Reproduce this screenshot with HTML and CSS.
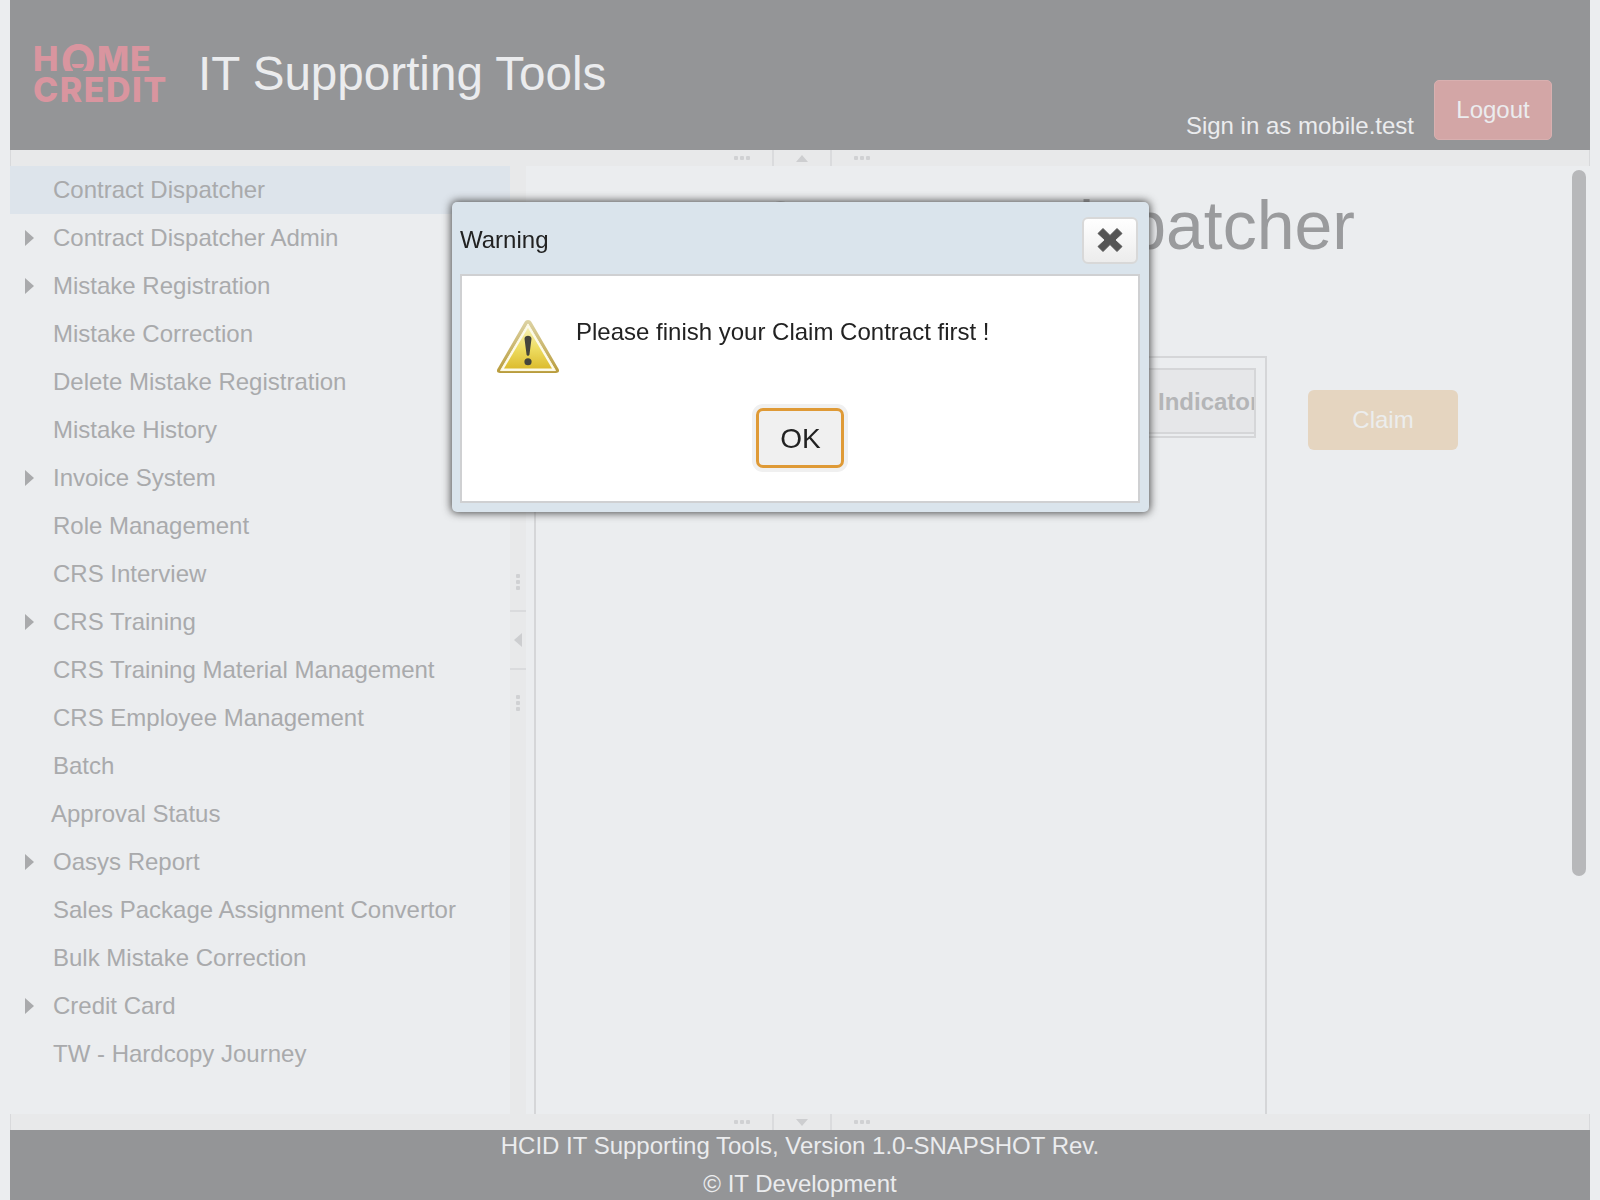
FILE: index.html
```html
<!DOCTYPE html>
<html lang="en">
<head>
    <meta charset="UTF-8">
    <title>IT Supporting Tools</title>
    <link rel="stylesheet" href="styles.css">
</head>
<body>
    <div class="header">
        <div class="logo">
            <div class="logo-line">H<span class="logo-o">O</span>ME</div>
            <div class="logo-line">CREDIT</div>
        </div>
        <div class="app-title">IT Supporting Tools</div>
        <div class="user-box">
            <span class="user-name">Sign in as mobile.test</span>
            <button class="logout-btn">Logout</button>
        </div>
    </div>

    <div class="resizer-h">
        <span class="dots"><i></i><i></i><i></i></span>
        <span class="toggler"><span class="arrow-up"></span></span>
        <span class="dots"><i></i><i></i><i></i></span>
    </div>

    <div class="middle">
        <ul class="menu">
            <li class="active">Contract Dispatcher</li>
            <li class="sub">Contract Dispatcher Admin</li>
            <li class="sub">Mistake Registration</li>
            <li>Mistake Correction</li>
            <li>Delete Mistake Registration</li>
            <li>Mistake History</li>
            <li class="sub">Invoice System</li>
            <li>Role Management</li>
            <li>CRS Interview</li>
            <li class="sub">CRS Training</li>
            <li>CRS Training Material Management</li>
            <li>CRS Employee Management</li>
            <li>Batch</li>
            <li class="shifted">Approval Status</li>
            <li class="sub">Oasys Report</li>
            <li>Sales Package Assignment Convertor</li>
            <li>Bulk Mistake Correction</li>
            <li class="sub">Credit Card</li>
            <li>TW - Hardcopy Journey</li>
        </ul>

        <div class="resizer-v">
            <span class="dots-v"><i></i><i></i><i></i></span>
            <span class="toggler-v"><span class="arrow-left"></span></span>
            <span class="dots-v"><i></i><i></i><i></i></span>
        </div>

        <div class="content">
            <div class="content-main">
                <h1>Contract Dispatcher</h1>
                <div class="work-row">
                    <div class="table-box">
                        <div class="table-head">
                            <table>
                                <thead>
                                    <tr>
                                        <th class="col-fill"></th>
                                        <th class="col-indicator"><div class="clip">Indicator</div></th>
                                    </tr>
                                </thead>
                            </table>
                        </div>
                    </div>
                    <button class="claim-btn">Claim</button>
                </div>
            </div>
            <div class="scroll-rail"><div class="scroll-thumb"></div></div>
        </div>
    </div>

    <div class="resizer-h">
        <span class="dots"><i></i><i></i><i></i></span>
        <span class="toggler"><span class="arrow-down"></span></span>
        <span class="dots"><i></i><i></i><i></i></span>
    </div>

    <div class="footer">
        <div>HCID IT Supporting Tools, Version 1.0-SNAPSHOT Rev.</div>
        <div>© IT Development</div>
    </div>

    <!-- Warning dialog -->
    <div class="dialog">
        <div class="dialog-title">
            <span class="dialog-caption">Warning</span>
            <button class="close-btn">
                <svg width="26" height="26" viewBox="0 0 26 26">
                    <path d="M6 1.5 L13 8.5 L20 1.5 L25 6.5 L18 13 L25 19.5 L20 24.5 L13 17.5 L6 24.5 L1 19.5 L8 13 L1 6.5 Z" fill="#555" stroke="#555" stroke-width="1" stroke-linejoin="round"/>
                </svg>
            </button>
        </div>
        <div class="dialog-body">
            <div class="dialog-msg">
                <svg class="warn-icon" width="64" height="55" viewBox="0 0 64 56" preserveAspectRatio="none">
                    <defs>
                        <linearGradient id="warnRim" x1="0" y1="0" x2="0" y2="1">
                            <stop offset="0" stop-color="#ddd3a4"/>
                            <stop offset="1" stop-color="#b99c3c"/>
                        </linearGradient>
                        <linearGradient id="warnFill" x1="0" y1="0" x2="0" y2="1">
                            <stop offset="0" stop-color="#f6f0b4"/>
                            <stop offset="0.5" stop-color="#eedd62"/>
                            <stop offset="1" stop-color="#dcbc2e"/>
                        </linearGradient>
                    </defs>
                    <path d="M32 1 C34 1 35 2 36 4 L62 50 C64 53 63 55 60 55 L4 55 C1 55 0 53 2 50 L28 4 C29 2 30 1 32 1 Z" fill="url(#warnRim)"/>
                    <path d="M32 5 L59.5 52.5 L4.5 52.5 Z" fill="#fdfbea" stroke="#fdfbea" stroke-width="1" stroke-linejoin="round"/>
                    <path d="M32 9 L56 50.5 L8 50.5 Z" fill="url(#warnFill)"/>
                    <path d="M28.5 20 C28.5 16 35.5 16 35.5 20 L33.5 36 C33.5 38 30.5 38 30.5 36 Z" fill="#45453c"/>
                    <circle cx="32" cy="43.5" r="3.6" fill="#45453c"/>
                </svg>
                <div class="msg-text">Please finish your Claim Contract first !</div>
            </div>
            <div class="dialog-buttons">
                <button class="ok-btn">OK</button>
            </div>
        </div>
    </div>
</body>
</html>
```

FILE: styles.css
```css
html, body {
    margin: 0;
    height: 100%;
}
body {
    font-family: "Liberation Sans", Arial, sans-serif;
    font-size: 24px;
    background-color: #ebedef;
    padding: 0 10px;
    height: 1200px;
    box-sizing: border-box;
    overflow: hidden;
    display: flex;
    flex-direction: column;
}
button {
    font-family: inherit;
}

/* header */
.header {
    height: 150px;
    flex: none;
    background-color: #949597;
    display: flex;
}
.logo {
    margin: 43px 0 0 23px;
    width: 166px;
    color: #d9959f;
    font-family: Inter, "Liberation Sans", sans-serif;
    font-weight: 800;
    font-size: 34px;
    line-height: 31px;
    letter-spacing: 1px;
    white-space: nowrap;
}
.logo-line {
    height: 31px;
}
.logo-line + .logo-line {
    letter-spacing: 1.5px;
}
.logo-o {
    position: relative;
    display: inline-block;
    font-size: 46px;
    font-weight: 700;
    line-height: 34px;
    height: 27px;
    overflow: hidden;
    letter-spacing: 0;
    margin: 0 1px;
}
.logo-o::before {
    content: "";
    position: absolute;
    left: 50%;
    margin-left: -5px;
    bottom: 0;
    width: 10px;
    height: 3px;
    background-color: #949597;
}
.logo-o::after {
    content: "";
    position: absolute;
    left: 50%;
    margin-left: -6px;
    top: 20px;
    width: 12px;
    height: 4px;
    background-color: #d9959f;
    border-radius: 0 0 6px 6px;
}
.app-title {
    font-size: 47.6px;
    color: #ebecee;
    margin-left: -1px;
    line-height: 148px;
}
.user-box {
    margin-left: auto;
    margin-right: 38px;
    display: flex;
    align-items: flex-end;
    padding-bottom: 10px;
}
.user-name {
    color: #ebecee;
    margin-right: 20px;
    line-height: 28px;
}
.logout-btn {
    width: 118px;
    height: 60px;
    font-size: 24px;
    color: #ebecee;
    background-color: #d3a6a6;
    border: 1px solid #d8b0b0;
    border-radius: 5px;
}

/* resizers */
.resizer-h {
    height: 16px;
    flex: none;
    background-color: #e8e9ea;
    border-left: 1px solid #d8d9db;
    border-right: 1px solid #d8d9db;
    display: flex;
    justify-content: center;
    align-items: center;
    padding-left: 4px;
}
.dots {
    display: flex;
    gap: 2px;
    width: 40px;
}
.dots:first-child {
    justify-content: flex-end;
    margin-right: 22px;
}
.dots:last-child {
    margin-left: 22px;
}
.dots i, .dots-v i {
    display: block;
    width: 4px;
    height: 4px;
    background-color: #d0d1d3;
    border-radius: 1px;
}
.toggler {
    width: 60px;
    height: 16px;
    box-sizing: border-box;
    border-left: 2px solid #dadbdd;
    border-right: 2px solid #dadbdd;
    display: flex;
    justify-content: center;
    align-items: center;
}
.arrow-up {
    border-left: 6px solid transparent;
    border-right: 6px solid transparent;
    border-bottom: 7px solid #cdced0;
}
.arrow-down {
    border-left: 6px solid transparent;
    border-right: 6px solid transparent;
    border-top: 7px solid #cdced0;
}

/* middle row */
.middle {
    flex: 1;
    display: flex;
    min-height: 0;
}
.menu {
    width: 500px;
    flex: none;
    margin: 0;
    padding: 0;
    list-style: none;
    color: #a9aaac;
}
.menu li {
    height: 48px;
    line-height: 48px;
    padding-left: 43px;
    position: relative;
}
.menu li.active {
    background-color: #dde4eb;
}
.menu li.shifted {
    padding-left: 41px;
}
.menu li.sub::before {
    content: "";
    position: absolute;
    left: 15px;
    top: 16px;
    border-top: 8px solid transparent;
    border-bottom: 8px solid transparent;
    border-left: 9px solid #a9aaac;
}
.resizer-v {
    width: 16px;
    flex: none;
    background-color: #e8e9ea;
    display: flex;
    flex-direction: column;
    align-items: center;
    justify-content: center;
    padding-top: 5px;
    box-sizing: border-box;
}
.dots-v {
    display: flex;
    flex-direction: column;
    gap: 2px;
    height: 40px;
}
.dots-v:first-child {
    justify-content: flex-end;
    margin-bottom: 20px;
}
.dots-v:last-child {
    margin-top: 25px;
}
.toggler-v {
    width: 16px;
    height: 60px;
    box-sizing: border-box;
    border-top: 2px solid #dadbdd;
    border-bottom: 2px solid #dadbdd;
    display: flex;
    justify-content: center;
    align-items: center;
}
.arrow-left {
    border-top: 7px solid transparent;
    border-bottom: 7px solid transparent;
    border-right: 8px solid #cdced0;
}

/* center panel */
.content {
    flex: 1;
    display: flex;
    min-width: 0;
}
.content-main {
    flex: 1;
    min-width: 0;
    display: flex;
    flex-direction: column;
}
h1 {
    margin: 0;
    height: 190px;
    font-size: 68px;
    font-weight: normal;
    line-height: 118px;
    color: #9a9b9d;
    text-align: center;
    padding-left: 11px;
    flex: none;
}
.work-row {
    flex: 1;
    display: flex;
    align-items: flex-start;
    padding-left: 8px;
}
.table-box {
    width: 733px;
    height: 100%;
    box-sizing: border-box;
    border: 2px solid #d5d6d8;
    border-bottom: none;
    padding: 10px 9px;
    flex: none;
}
.table-head {
    border: 2px solid #d5d6d8;
    padding-bottom: 2px;
}
table {
    width: 100%;
    table-layout: fixed;
    border-collapse: collapse;
}
th {
    height: 62px;
    padding: 0;
    background-color: #e6e7e9;
    border-bottom: 2px solid #d5d6d8;
    color: #b4b5b7;
    font-size: 24px;
    text-align: left;
}
.col-indicator {
    width: 96px;
}
.clip {
    overflow: hidden;
    white-space: nowrap;
    width: 96px;
    padding-top: 2px;
}
.claim-btn {
    width: 150px;
    height: 60px;
    margin: 34px 0 0 41px;
    font-size: 24px;
    color: #eceded;
    background-color: #e5d5c0;
    border: none;
    border-radius: 6px;
}
.scroll-rail {
    width: 14px;
    flex: none;
    margin-right: 4px;
    padding-top: 4px;
}
.scroll-thumb {
    height: 706px;
    background-color: #b7b8ba;
    border-radius: 7px;
}

/* footer */
.footer {
    height: 70px;
    flex: none;
    background-color: #949597;
    color: #ebecee;
    text-align: center;
    line-height: 32px;
    display: flex;
    flex-direction: column;
    gap: 6px;
}

/* dialog */
.dialog {
    position: fixed;
    left: 452px;
    top: 202px;
    width: 697px;
    height: 310px;
    box-sizing: border-box;
    background-color: #dae4ec;
    border-radius: 5px;
    box-shadow: 0 0 8px 1px #4a4a4a;
    padding: 0 9px 9px 8px;
    display: flex;
    flex-direction: column;
    color: #222;
}
.dialog-title {
    height: 72px;
    flex: none;
    display: flex;
    justify-content: space-between;
    align-items: center;
    padding-right: 2px;
}
.dialog-caption {
    margin-top: 4px;
}
.close-btn {
    width: 56px;
    height: 47px;
    margin-top: 4px;
    padding: 0;
    background: linear-gradient(#ffffff, #ececec);
    border: 2px solid #d8d8d8;
    border-radius: 6px;
    display: flex;
    align-items: center;
    justify-content: center;
}
.dialog-body {
    flex: 1;
    background-color: #fff;
    border: 2px solid #cfd0d2;
    padding: 44px 0 0 34px;
}
.dialog-msg {
    display: flex;
    align-items: flex-start;
    height: 88px;
}
.warn-icon {
    flex: none;
    margin-top: -1px;
}
.msg-text {
    margin-left: 16px;
    line-height: 28px;
    margin-top: -2px;
}
.dialog-buttons {
    display: flex;
    justify-content: center;
    padding-right: 34px;
}
.ok-btn {
    width: 88px;
    height: 60px;
    font-size: 28px;
    color: #222;
    background-color: #f0f0f0;
    border: 3px solid #df9a36;
    border-radius: 7px;
    box-shadow: 0 0 0 4px #f0f0f0;
    padding: 2px 0 0 1px;
}
```
